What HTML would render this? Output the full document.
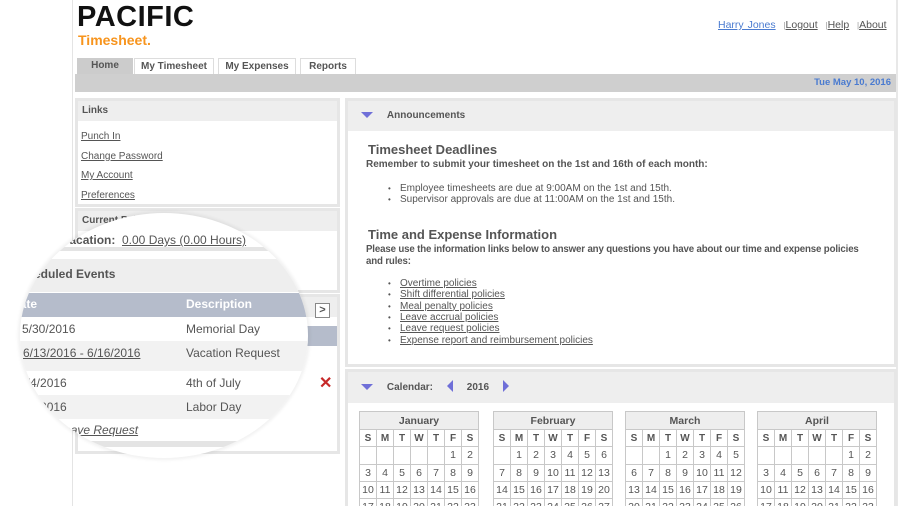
<!DOCTYPE html>
<html><head><meta charset="utf-8"><style>
*{margin:0;padding:0;box-sizing:border-box}
html,body{width:900px;height:506px;overflow:hidden}
body{background:#fff;font-family:"Liberation Sans",Arial,sans-serif;color:#555;position:relative}
.a{position:absolute}
a,u{color:#555;text-decoration:underline}
.panel{position:absolute;border:3px solid #e6e6e6;background:#fff}
.ph{background:#eee;font-weight:bold;font-size:10px;color:#555;height:20px;line-height:19px;padding-left:4px}
.tri{display:inline-block;width:0;height:0;border-left:6px solid transparent;border-right:6px solid transparent;border-top:6px solid #6f6fd8}
.cal{position:absolute;top:411px;width:120px;border-collapse:collapse;table-layout:fixed;font-size:10.5px;color:#555}
.cal td{border:1px solid #c8c8c8;height:17.3px;text-align:center;padding:0}
.cal tr.h td{background:#eee;font-weight:bold;height:18px}
.cal tr.d td{font-weight:bold;font-size:10px}
ul{list-style:none}
li{font-size:10px;line-height:11.4px;padding-left:12px;position:relative}
li:before{content:"•";position:absolute;left:0;font-size:8px}
</style></head><body>
<div class="a" style="left:72px;top:0;width:1px;height:506px;background:#e4e4e4"></div>
<div class="a" style="left:896px;top:0;width:2px;height:506px;background:#e8e8e8"></div>
<div class="a" style="left:77px;top:1px;font-size:29px;font-weight:bold;color:#111;letter-spacing:0.5px">PACIFIC</div>
<div class="a" style="left:78px;top:32px;font-size:14px;font-weight:bold;color:#f7941d">Timesheet.</div>
<div class="a" style="left:718px;top:19px;font-size:10.5px;color:#999;word-spacing:1px"><a style="color:#4a7bd0">Harry Jones</a>&nbsp; <span style="font-size:8px">|</span><a>Logout</a>&nbsp; <span style="font-size:8px">|</span><a>Help</a>&nbsp; <span style="font-size:8px">|</span><a>About</a></div>
<div class="a" style="left:77px;top:58px;width:56px;height:16px;background:#ccc;font-size:10px;font-weight:bold;text-align:center;line-height:15px">Home</div>
<div class="a" style="left:134px;top:58px;width:80px;height:16px;border:1px solid #ddd;border-bottom:none;font-size:10px;font-weight:bold;text-align:center;line-height:15px">My Timesheet</div>
<div class="a" style="left:218px;top:58px;width:78px;height:16px;border:1px solid #ddd;border-bottom:none;font-size:10px;font-weight:bold;text-align:center;line-height:15px">My Expenses</div>
<div class="a" style="left:300px;top:58px;width:56px;height:16px;border:1px solid #ddd;border-bottom:none;font-size:10px;font-weight:bold;text-align:center;line-height:15px">Reports</div>
<div class="a" style="left:75px;top:74px;width:821px;height:18px;background:#cfcfcf;text-align:right;padding-right:5px;font-size:9.5px;font-weight:bold;color:#4a7bd0;line-height:18px">Tue May 10, 2016</div>

<div class="panel" style="left:75px;top:98px;width:265px;height:109px"><div class="ph">Links</div>
<div style="font-size:10px;padding:6px 0 0 3px;line-height:19.6px"><a>Punch In</a><br><a>Change Password</a><br><a>My Account</a><br><a>Preferences</a></div></div>
<div class="panel" style="left:75px;top:208px;width:265px;height:85px"><div class="ph">Current Balances</div>
<div style="font-size:10px;padding:5px 0 0 3px">Vacation: <a>0.00 Days (0.00 Hours)</a></div></div>
<div class="panel" style="left:75px;top:294px;width:265px;height:160px"><div class="ph">Scheduled Events</div>
<div class="a" style="left:237px;top:6px;width:15px;height:15px;border:1px solid #888;background:#fff;font-size:11px;font-weight:bold;text-align:center;line-height:13px">&gt;</div>
<div class="a" style="left:0;top:29px;width:259px;height:20px;background:#b5bccb"></div>
<div class="a" style="left:241px;top:76px;color:#c62828;font-size:16px;font-weight:bold">✕</div>
</div>

<div class="panel" style="left:345px;top:98px;width:552px;height:269px">
<div class="ph" style="height:30px;line-height:30px;padding-left:13px;font-size:10px"><span class="tri"></span>&nbsp;&nbsp;&nbsp;&nbsp;&nbsp;Announcements</div>
<div style="padding:11px 0 0 20px;font-size:13px;font-weight:bold;color:#555">Timesheet Deadlines</div>
<div style="padding:2px 0 0 18px;font-size:10px;font-weight:bold">Remember to submit your timesheet on the 1st and 16th of each month:</div>
<ul style="padding:13px 0 0 40px"><li>Employee timesheets are due at 9:00AM on the 1st and 15th.</li><li>Supervisor approvals are due at 11:00AM on the 1st and 15th.</li></ul>
<div style="padding:21px 0 0 20px;font-size:13px;font-weight:bold">Time and Expense Information</div>
<div style="padding:2px 24px 0 18px;font-size:9.7px;font-weight:bold;line-height:12px;letter-spacing:-0.15px">Please use the information links below to answer any questions you have about our time and expense policies and rules:</div>
<ul style="padding:10px 0 0 40px"><li><a>Overtime policies</a></li><li><a>Shift differential policies</a></li><li><a>Meal penalty policies</a></li><li><a>Leave accrual policies</a></li><li><a>Leave request policies</a></li><li><a>Expense report and reimbursement policies</a></li></ul>
</div>

<div class="panel" style="left:345px;top:369px;width:552px;height:140px;border-bottom:none">
<div class="ph" style="height:31px;line-height:31px;padding-left:13px;font-size:10px"><span class="tri"></span>&nbsp;&nbsp;&nbsp;&nbsp;&nbsp;Calendar:&nbsp;&nbsp;&nbsp;&nbsp;&nbsp;<span style="display:inline-block;width:0;height:0;border-top:6px solid transparent;border-bottom:6px solid transparent;border-right:6px solid #6f6fd8;vertical-align:-2px"></span>&nbsp;&nbsp;&nbsp;&nbsp;&nbsp;2016&nbsp;&nbsp;&nbsp;&nbsp;&nbsp;<span style="display:inline-block;width:0;height:0;border-top:6px solid transparent;border-bottom:6px solid transparent;border-left:6px solid #6f6fd8;vertical-align:-2px"></span></div>
</div>

<table class="cal" style="left:359px"><tr class="h"><td colspan="7">January</td></tr><tr class="d"><td>S</td><td>M</td><td>T</td><td>W</td><td>T</td><td>F</td><td>S</td></tr>
<tr><td></td><td></td><td></td><td></td><td></td><td>1</td><td>2</td></tr><tr><td>3</td><td>4</td><td>5</td><td>6</td><td>7</td><td>8</td><td>9</td></tr><tr><td>10</td><td>11</td><td>12</td><td>13</td><td>14</td><td>15</td><td>16</td></tr><tr><td>17</td><td>18</td><td>19</td><td>20</td><td>21</td><td>22</td><td>23</td></tr></table>
<table class="cal" style="left:493px"><tr class="h"><td colspan="7">February</td></tr><tr class="d"><td>S</td><td>M</td><td>T</td><td>W</td><td>T</td><td>F</td><td>S</td></tr>
<tr><td></td><td>1</td><td>2</td><td>3</td><td>4</td><td>5</td><td>6</td></tr><tr><td>7</td><td>8</td><td>9</td><td>10</td><td>11</td><td>12</td><td>13</td></tr><tr><td>14</td><td>15</td><td>16</td><td>17</td><td>18</td><td>19</td><td>20</td></tr><tr><td>21</td><td>22</td><td>23</td><td>24</td><td>25</td><td>26</td><td>27</td></tr></table>
<table class="cal" style="left:625px"><tr class="h"><td colspan="7">March</td></tr><tr class="d"><td>S</td><td>M</td><td>T</td><td>W</td><td>T</td><td>F</td><td>S</td></tr>
<tr><td></td><td></td><td>1</td><td>2</td><td>3</td><td>4</td><td>5</td></tr><tr><td>6</td><td>7</td><td>8</td><td>9</td><td>10</td><td>11</td><td>12</td></tr><tr><td>13</td><td>14</td><td>15</td><td>16</td><td>17</td><td>18</td><td>19</td></tr><tr><td>20</td><td>21</td><td>22</td><td>23</td><td>24</td><td>25</td><td>26</td></tr></table>
<table class="cal" style="left:757px"><tr class="h"><td colspan="7">April</td></tr><tr class="d"><td>S</td><td>M</td><td>T</td><td>W</td><td>T</td><td>F</td><td>S</td></tr>
<tr><td></td><td></td><td></td><td></td><td></td><td>1</td><td>2</td></tr><tr><td>3</td><td>4</td><td>5</td><td>6</td><td>7</td><td>8</td><td>9</td></tr><tr><td>10</td><td>11</td><td>12</td><td>13</td><td>14</td><td>15</td><td>16</td></tr><tr><td>17</td><td>18</td><td>19</td><td>20</td><td>21</td><td>22</td><td>23</td></tr></table>

<!-- magnifier -->
<div class="a" style="left:20px;top:213px;width:288px;height:245px;border-radius:50%;background:#fff;box-shadow:0 0 3px 2px rgba(0,0,0,0.06);overflow:hidden">
 <div class="a" style="left:0;top:18px;width:288px;font-size:12px;color:#555"><span class="a" style="left:42px;top:2px;font-weight:bold">Vacation:</span><span class="a" style="left:102px;top:2px;text-decoration:underline">0.00 Days (0.00 Hours)</span></div>
 <div class="a" style="left:0;top:34px;width:288px;height:4px;background:#e4e4e4"></div>
 <div class="a" style="left:0;top:46px;width:288px;height:33px;background:#eee;font-size:12px;font-weight:bold"><span class="a" style="left:-8px;top:8px">Scheduled Events</span></div>
 <div class="a" style="left:0;top:80px;width:288px;height:24px;background:#b5bccb;color:#fff;font-size:12px;font-weight:bold"><span class="a" style="left:-9px;top:4px">Date</span><span class="a" style="left:166px;top:4px">Description</span></div>
 <div class="a" style="left:0;top:104px;width:288px;height:24px;font-size:12px"><span class="a" style="left:2px;top:5px">5/30/2016</span><span class="a" style="left:166px;top:5px">Memorial Day</span></div>
 <div class="a" style="left:0;top:128px;width:288px;height:30px;background:#f2f2f2;font-size:12px"><span class="a" style="left:3px;top:5px;text-decoration:underline">6/13/2016 - 6/16/2016</span><span class="a" style="left:166px;top:5px">Vacation Request</span></div>
 <div class="a" style="left:0;top:158px;width:288px;height:24px;font-size:12px"><span class="a" style="left:0px;top:5px">7/4/2016</span><span class="a" style="left:166px;top:5px">4th of July</span></div>
 <div class="a" style="left:0;top:182px;width:288px;height:24px;background:#f2f2f2;font-size:12px"><span class="a" style="left:0px;top:5px">9/5/2016</span><span class="a" style="left:166px;top:5px">Labor Day</span></div>
 <div class="a" style="left:0;top:206px;width:288px;height:22px;font-size:12px;font-style:italic"><span class="a" style="left:10px;top:4px;text-decoration:underline">New Leave Request</span></div>
 <div class="a" style="left:0;top:228px;width:288px;height:6px;background:#e4e4e4"></div>
</div>
</body></html>
